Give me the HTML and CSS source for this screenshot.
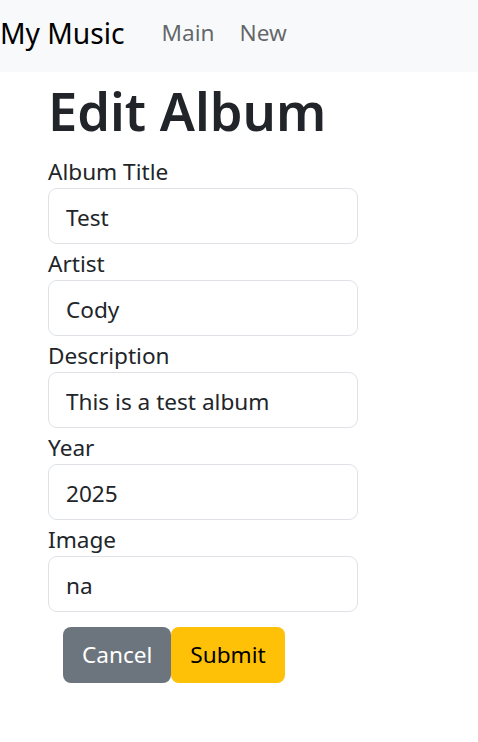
FILE: index.html
```html
<!DOCTYPE html>
<html lang="en">
<head>
<meta charset="utf-8">
<title>Edit Album</title>
<link rel="stylesheet" href="styles.css">
</head>
<body>
<nav class="navbar">
  <span class="brand">My Music</span>
  <a class="nav-link" href="#">Main</a>
  <a class="nav-link" href="#">New</a>
</nav>
<main class="container">
  <h1 class="title">Edit Album</h1>
  <form class="form">
    <label class="label">Album Title</label>
    <input class="input" type="text" value="Test">
    <label class="label">Artist</label>
    <input class="input" type="text" value="Cody">
    <label class="label">Description</label>
    <input class="input" type="text" value="This is a test album">
    <label class="label">Year</label>
    <input class="input" type="text" value="2025">
    <label class="label">Image</label>
    <input class="input" type="text" value="na">
    <div class="actions">
      <button type="button" class="btn btn-cancel">Cancel</button>
      <button type="submit" class="btn btn-submit">Submit</button>
    </div>
  </form>
</main>
</body>
</html>
```
FILE: styles.css
```css
* { box-sizing: border-box; }
body {
  margin: 0;
  font-family: "Noto Sans", "Open Sans", sans-serif;
  font-size: 22.6px;
  line-height: 1.5;
  color: #212529;
  background: #fff;
}
.navbar {
  height: 72px;
  background: #f8f9fa;
  display: flex;
  align-items: center;
  padding-bottom: 6px;
}
.brand {
  font-size: 28.2px;
  color: #000;
  margin-right: 37px;
}
.nav-link {
  color: rgba(33, 37, 41, 0.7);
  text-decoration: none;
  font-size: 22.6px;
  margin-right: 25px;
}
.container {
  padding-left: 48px;
  width: 358px;
}
.title {
  font-size: 52.4px;
  font-weight: 600;
  line-height: 1.2;
  margin: 8px 0 9px;
}
.form {
  display: flex;
  flex-direction: column;
}
.label {
  display: block;
  height: 36px;
  padding-top: 3px;
  line-height: 33px;
}
.input {
  display: block;
  width: 310px;
  height: 56px;
  border: 1px solid #dee2e6;
  border-radius: 9px;
  padding: 3px 17px 0;
  font: inherit;
  color: #212529;
  outline: none;
}
.actions {
  display: flex;
  margin-top: 15px;
  padding-left: 15px;
}
.btn {
  height: 56px;
  border: none;
  border-radius: 8px;
  font: inherit;
  padding: 1px 19px 0;
  cursor: pointer;
}
.btn-cancel { background: #6c757d; color: #fff; }
.btn-submit { background: #ffc107; color: #000; }
```
